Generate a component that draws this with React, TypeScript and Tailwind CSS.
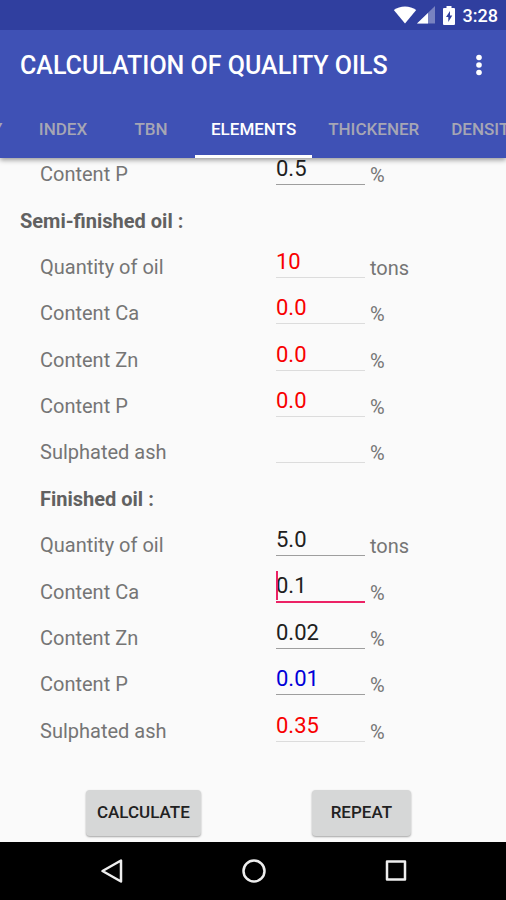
import React from 'react';
import clsx from 'clsx';

type Field = {
  id: string;
  label: string;
  value: string;
  unit: string;
  tone?: 'red' | 'blue';
  locked?: boolean;
  focused?: boolean;
};

const tabs = ['INDEX', 'TBN', 'ELEMENTS', 'THICKENER', 'DENSITY'];

const semiFinished: Field[] = [
  { id: 'semi-quantity', label: 'Quantity of oil', value: '10', unit: 'tons', tone: 'red', locked: true },
  { id: 'semi-ca', label: 'Content Ca', value: '0.0', unit: '%', tone: 'red', locked: true },
  { id: 'semi-zn', label: 'Content Zn', value: '0.0', unit: '%', tone: 'red', locked: true },
  { id: 'semi-p', label: 'Content P', value: '0.0', unit: '%', tone: 'red', locked: true },
  { id: 'semi-ash', label: 'Sulphated ash', value: '', unit: '%', locked: true },
];

const finished: Field[] = [
  { id: 'fin-quantity', label: 'Quantity of oil', value: '5.0', unit: 'tons' },
  { id: 'fin-ca', label: 'Content Ca', value: '0.1', unit: '%', focused: true },
  { id: 'fin-zn', label: 'Content Zn', value: '0.02', unit: '%' },
  { id: 'fin-p', label: 'Content P', value: '0.01', unit: '%', tone: 'blue' },
  { id: 'fin-ash', label: 'Sulphated ash', value: '0.35', unit: '%', tone: 'red', locked: true },
];

const FieldRow = ({ field }: { field: Field }) => (
  <div className="flex items-center pl-10 text-[20px] text-[#757575]">
    <label htmlFor={field.id} className="w-[236px]">
      {field.label}
    </label>
    <div className="relative mb-2">
      <input
        id={field.id}
        defaultValue={field.value}
        readOnly={field.locked}
        inputMode="decimal"
        className={clsx(
          'block h-[30px] w-[89px] bg-transparent pb-0.5 text-[22px] outline-none',
          field.focused ? 'border-b-2 border-[#ec2265]' : 'border-b',
          !field.focused && (field.locked ? 'border-[#dcdcdc]' : 'border-[#9e9e9e]'),
          field.tone === 'red' && 'text-[#f80000]',
          field.tone === 'blue' && 'text-[#0000d8]',
          !field.tone && 'text-[#202020]',
        )}
      />
      {field.focused && <span className="absolute -top-0.5 left-0 h-[29px] w-0.5 bg-[#ec2265]" />}
    </div>
    <span className="ml-[5px] mt-0.5">{field.unit}</span>
  </div>
);

const StatusBar = () => (
  <div className="flex h-[30px] items-center justify-end bg-[#303f9f] pr-2 text-white">
    <svg width="24" height="18" viewBox="0 0 24 18" fill="currentColor">
      <path d="M12 17.5 0.8 4C4 1.6 7.8 0.4 12 0.4S20 1.6 23.2 4Z" />
    </svg>
    <svg width="18" height="18" viewBox="0 0 18 18" fill="currentColor">
      <path d="M18 0v17.5H0Z" opacity="0.35" />
      <path d="M11 7v10.5H0Z" />
    </svg>
    <svg className="ml-2" width="12" height="19" viewBox="0 0 12 19" fill="currentColor">
      <path
        fillRule="evenodd"
        d="M3.5 0h5v2H11a1 1 0 0 1 1 1v15a1 1 0 0 1-1 1H1a1 1 0 0 1-1-1V3a1 1 0 0 1 1-1h2.500ZM7 5 3 11h2.300v5L9.300 9.500H7Z"
      />
    </svg>
    <span className="ml-2 text-[18px] font-medium">3:28</span>
  </div>
);

const App: React.FC = () => {
  const [active, setActive] = React.useState('ELEMENTS');

  return (
    <div className="flex h-screen flex-col overflow-hidden bg-[#fafafa] font-['Roboto',sans-serif]">
      <header className="relative z-10 bg-[#3f51b5] shadow-[0_2px_5px_rgba(0,0,0,0.4)]">
        <StatusBar />
        <div className="flex h-[72px] items-center justify-between pl-5 pr-5">
          <h1 className="text-[25px] font-medium text-white">CALCULATION OF QUALITY OILS</h1>
          <button type="button" aria-label="More options" className="text-white">
            <svg width="14" height="24" viewBox="0 0 14 24" fill="currentColor">
              <circle cx="7" cy="3.500" r="2.800" />
              <circle cx="7" cy="11" r="2.800" />
              <circle cx="7" cy="18.500" r="2.800" />
            </svg>
          </button>
        </div>
        <nav className="relative flex h-14 overflow-hidden pl-[19px]">
          <span className="absolute -left-2 top-[15px] text-[17px] font-medium text-[#a6a6b4]">Y</span>
          {tabs.map((tab) => (
            <button
              key={tab}
              type="button"
              onClick={() => setActive(tab)}
              className={clsx(
                'min-w-[88px] shrink-0 border-b-[3px] px-4 pt-0.5 text-[17px] font-medium',
                tab === active ? 'border-white text-white' : 'border-transparent text-[#a6a6b4]',
              )}
            >
              {tab}
            </button>
          ))}
        </nav>
      </header>

      <main className="flex min-h-0 flex-1 flex-col">
        <form className="flex flex-1 flex-col" onSubmit={(e) => e.preventDefault()}>
          <div className="-mt-[7px] grid flex-1 auto-rows-fr">
            <FieldRow field={{ id: 'base-p', label: 'Content P', value: '0.5', unit: '%' }} />
            <h2 className="flex items-center pl-5 text-[20px] font-bold text-[#616161]">Semi-finished oil :</h2>
            {semiFinished.map((field) => (
              <FieldRow key={field.id} field={field} />
            ))}
            <h2 className="flex items-center pl-10 text-[20px] font-bold text-[#616161]">Finished oil :</h2>
            {finished.map((field) => (
              <FieldRow key={field.id} field={field} />
            ))}
          </div>
          <div className="flex h-[88px] items-end justify-between pb-[6px] pl-[86px] pr-[95px] text-[17px] font-medium text-[#212121]">
            <button type="submit" className="h-[46px] rounded-sm bg-[#d6d7d7] px-[11px] shadow-[0_1px_2px_rgba(0,0,0,0.35)]">
              CALCULATE
            </button>
            <button type="reset" className="h-[46px] rounded-sm bg-[#d6d7d7] px-[19px] shadow-[0_1px_2px_rgba(0,0,0,0.35)]">
              REPEAT
            </button>
          </div>
        </form>
      </main>

      <footer className="flex h-[58px] items-center justify-center gap-[118px] bg-black pl-0.5 text-[#eeeeee]">
        <button type="button" aria-label="Back">
          <svg width="24" height="26" viewBox="0 0 24 26" fill="none" stroke="currentColor" strokeWidth="2.500" strokeLinejoin="round">
            <path d="M21 2.500v21L2.500 13Z" />
          </svg>
        </button>
        <button type="button" aria-label="Home">
          <svg width="24" height="26" viewBox="0 0 24 26" fill="none" stroke="currentColor" strokeWidth="2.500">
            <circle cx="12" cy="13" r="10.500" />
          </svg>
        </button>
        <button type="button" aria-label="Recent apps">
          <svg width="24" height="26" viewBox="0 0 24 26" fill="none" stroke="currentColor" strokeWidth="2.500" strokeLinejoin="round">
            <rect x="3" y="3.500" width="18" height="18" />
          </svg>
        </button>
      </footer>
    </div>
  );
};

export default App;
